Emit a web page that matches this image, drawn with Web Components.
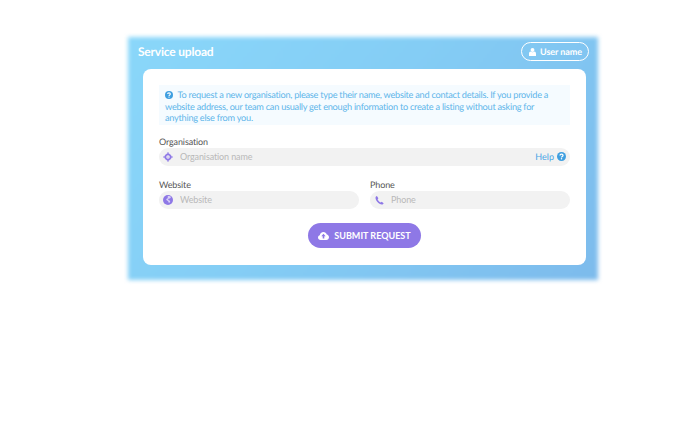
<!DOCTYPE html>
<html lang="en">
<head>
<meta charset="utf-8">
<title>Service upload</title>
<style>
  html, body { margin: 0; padding: 0; background: #fff; }
  body { font-family: Lato, "Open Sans", sans-serif; width: 700px; height: 430px; overflow: hidden; text-rendering: geometricPrecision; }
</style>
</head>
<body>
<upload-panel heading="Service upload" user="User name">
  <info-note>To request a new organisation, please type their name, website and contact details. If you provide a website address, our team can usually get enough information to create a listing without asking for anything else from you.</info-note>
  <form-field label="Organisation" placeholder="Organisation name" icon="org" help></form-field>
  <div style="display:grid;grid-template-columns:200px 200px;column-gap:11px;margin-top:12px">
    <form-field label="Website" placeholder="Website" icon="globe"></form-field>
    <form-field label="Phone" placeholder="Phone" icon="phone"></form-field>
  </div>
  <submit-button>SUBMIT REQUEST</submit-button>
</upload-panel>

<script>
// icons used by the form
const icons = {
  org: `<svg width="10" height="10" viewBox="0 0 10 10"><path fill="#8e78e6" d="M5 0l1.500 1.700H3.500zM5 10L3.500 8.300h3zM0 5l1.700-1.500v3zM10 5L8.300 6.500v-3z"/><circle cx="5" cy="5" r="2.500" fill="none" stroke="#8e78e6" stroke-width="1.500"/><circle cx="5" cy="5" r=".6" fill="#8e78e6"/></svg>`,
  globe: `<svg width="10" height="10" viewBox="0 0 10 10"><circle cx="5" cy="5" r="5" fill="#8e78e6"/><path fill="#d9d2f7" d="M4.800 1.200c1.300-.3 2.600 0 3.200.8-.6.6-.4 1.400-1.200 1.600-.8.2-1.600 0-1.600.8 0 .7 1.200.7 1.800 1.300.5.6-.1 1.700-1 2.300-.5-.5-.3-1.300-.9-1.800C4.400 5.700 3.400 5.400 3.200 4.600c-.2-.9 1-.8 1.500-1.400.3-.5-.2-1.300.1-2z"/></svg>`,
  phone: `<svg width="9" height="9" viewBox="0 0 10 10"><path fill="#8e78e6" d="M2.100 0C1.400.2.700.8.600 1.500c-.3 1.700.8 3.800 2.100 5.200 1.400 1.400 3.300 2.800 5.200 2.700.8 0 1.500-.7 1.700-1.400L7.500 6.300 6.300 7.200C5 6.600 3.400 5 2.900 3.600l.9-1.200z"/></svg>`,
  user: `<svg width="7" height="8" viewBox="0 0 8 9"><circle cx="4" cy="2.200" r="2.200" fill="#fff"/><path fill="#fff" d="M1.600 4c.6.500 1.500.8 2.400.8S5.800 4.500 6.400 4C7.400 4.400 8 5.400 8 6.500V9H0V6.500C0 5.400.6 4.400 1.600 4z"/></svg>`,
  cloud: `<svg width="11" height="8" viewBox="0 0 11 8"><path fill="#fff" d="M2.500 8C1.100 8 0 6.900 0 5.600 0 4.500.8 3.600 1.800 3.300 2 1.400 3.500 0 5.400 0c1.600 0 3 1 3.400 2.600C10 2.900 11 4 11 5.300 11 6.800 9.800 8 8.300 8z"/><path fill="#8e78e6" d="M5.500 1.800L3.300 4.200h1.400v2.300h1.600V4.200h1.400z"/></svg>`,
  question: (bg, size) => `<svg width="${size}" height="${size}" viewBox="0 0 10 10"><circle cx="5" cy="5" r="5" fill="${bg}"/><path fill="none" stroke="#fff" stroke-width="1.400" d="M3.300 3.900c0-1 .8-1.500 1.700-1.500s1.700.6 1.700 1.400c0 1.200-1.700 1.200-1.700 2.300"/><circle cx="5" cy="7.600" r=".85" fill="#fff"/></svg>`,
};

// the blue panel with its title bar and white card
class UploadPanel extends HTMLElement {
  constructor() {
    super();
    const shadow = this.attachShadow({ mode: "open" });
    shadow.innerHTML = `
      <style>
        :host { display: block; position: relative; width: 470px; margin: 37px 0 0 128px; box-sizing: border-box;
          padding: 0 12px 15px 15px; }
        /* the soft edge of the panel */
        .back { position: absolute; inset: 0; filter: blur(2px);
          background: linear-gradient(130deg, #8ad7fa 0%, #84cdf5 45%, #7dbbec 100%); }
        header, .card { position: relative; }
        header { height: 32px; display: flex; justify-content: space-between; margin: 0 -3px 0 -5px; }
        h1 { margin: 7.500px 0 0; font: 700 12px/14px Lato, sans-serif; letter-spacing: -.2px; color: #fff; }
        .user { display: flex; align-items: center; gap: 4px; box-sizing: border-box; height: 19px; width: 68px;
          padding-left: 7px; margin-top: 5px; border: 1.5px solid #fff; border-radius: 10px;
          font: 700 9px/1 Lato, sans-serif; letter-spacing: -.08px; color: #fff; white-space: nowrap; }
        .user svg { flex: none; }
        .card { background: #fff; border-radius: 8px; padding: 16px 16px 17px; height: 196px; box-sizing: border-box; }
      </style>
      <div class="back"></div>
      <header>
        <h1></h1>
        <div class="user">${icons.user}<span></span></div>
      </header>
      <div class="card"><slot></slot></div>
    `;
  }

  static get observedAttributes() {
    return ["heading", "user"];
  }

  attributeChangedCallback(name, oldValue, newValue) {
    if (name === "heading") this.shadowRoot.querySelector("h1").textContent = newValue;
    if (name === "user") this.shadowRoot.querySelector(".user span").textContent = newValue;
  }
}

// the pale blue explanation box
class InfoNote extends HTMLElement {
  constructor() {
    super();
    const shadow = this.attachShadow({ mode: "open" });
    shadow.innerHTML = `
      <style>
        :host { display: block; box-sizing: border-box; height: 40px; padding: 4px 6px 0; background: #f5fbff;
          font: 400 9.200px/11.500px Lato, sans-serif; letter-spacing: -.26px; color: #5fb6ea; margin-bottom: 10px; }
        svg { vertical-align: -1px; margin: 0 4.500px 0 0; }
      </style>
      ${icons.question("#3f9fe0", 8)}<slot></slot>
    `;
  }
}

// label with a rounded grey input, icon on the left
class FormField extends HTMLElement {
  constructor() {
    super();
    const shadow = this.attachShadow({ mode: "open" });
    shadow.innerHTML = `
      <style>
        :host { display: block; }
        label { display: block; height: 13px; font: 400 9px/13px Lato, sans-serif; letter-spacing: -.12px; color: #555; }
        .box { height: 18px; display: flex; align-items: center; background: #f2f2f2; border-radius: 9px; }
        .icon { width: 18px; margin-right: 3px; flex: none; display: flex; justify-content: center; }
        input { flex: 1; min-width: 0; border: 0; outline: 0; background: transparent; padding: 0;
          font: 400 9px/18px Lato, sans-serif; letter-spacing: -.12px; color: #555; }
        input::placeholder { color: #b9b9b9; opacity: 1; }
        .help { display: flex; align-items: center; gap: 3px; margin: 0 4px 2px 0; font: 400 9px/1 Lato, sans-serif; color: #4aa5e6; }
      </style>
      <label></label>
      <div class="box">
        <span class="icon"></span>
        <input type="text">
      </div>
    `;
  }

  static get observedAttributes() {
    return ["label", "placeholder", "icon", "help"];
  }

  attributeChangedCallback(name, oldValue, newValue) {
    const root = this.shadowRoot;
    switch (name) {
      case "label":
        root.querySelector("label").textContent = newValue;
        return;
      case "placeholder":
        root.querySelector("input").placeholder = newValue;
        return;
      case "icon":
        root.querySelector(".icon").innerHTML = icons[newValue];
        return;
      case "help": {
        const help = document.createElement("span");
        help.className = "help";
        help.innerHTML = `Help ${icons.question("#3f9fe0", 9)}`;
        root.querySelector(".box").append(help);
        return;
      }
    }
  }
}

// the purple pill at the bottom of the card
class SubmitButton extends HTMLElement {
  constructor() {
    super();
    const shadow = this.attachShadow({ mode: "open" });
    shadow.innerHTML = `
      <style>
        :host { display: flex; justify-content: center; margin-top: 14px; }
        button { width: 113px; height: 25px; border: 0; border-radius: 13px; background: #8e78e6; color: #fff; padding: 0;
          display: flex; align-items: center; justify-content: center; gap: 5px;
          font: 700 9px/1 Lato, sans-serif; }
      </style>
      <button type="button">${icons.cloud}<slot></slot></button>
    `;
  }
}

customElements.define("upload-panel", UploadPanel);
customElements.define("info-note", InfoNote);
customElements.define("form-field", FormField);
customElements.define("submit-button", SubmitButton);
</script>
</body>
</html>
